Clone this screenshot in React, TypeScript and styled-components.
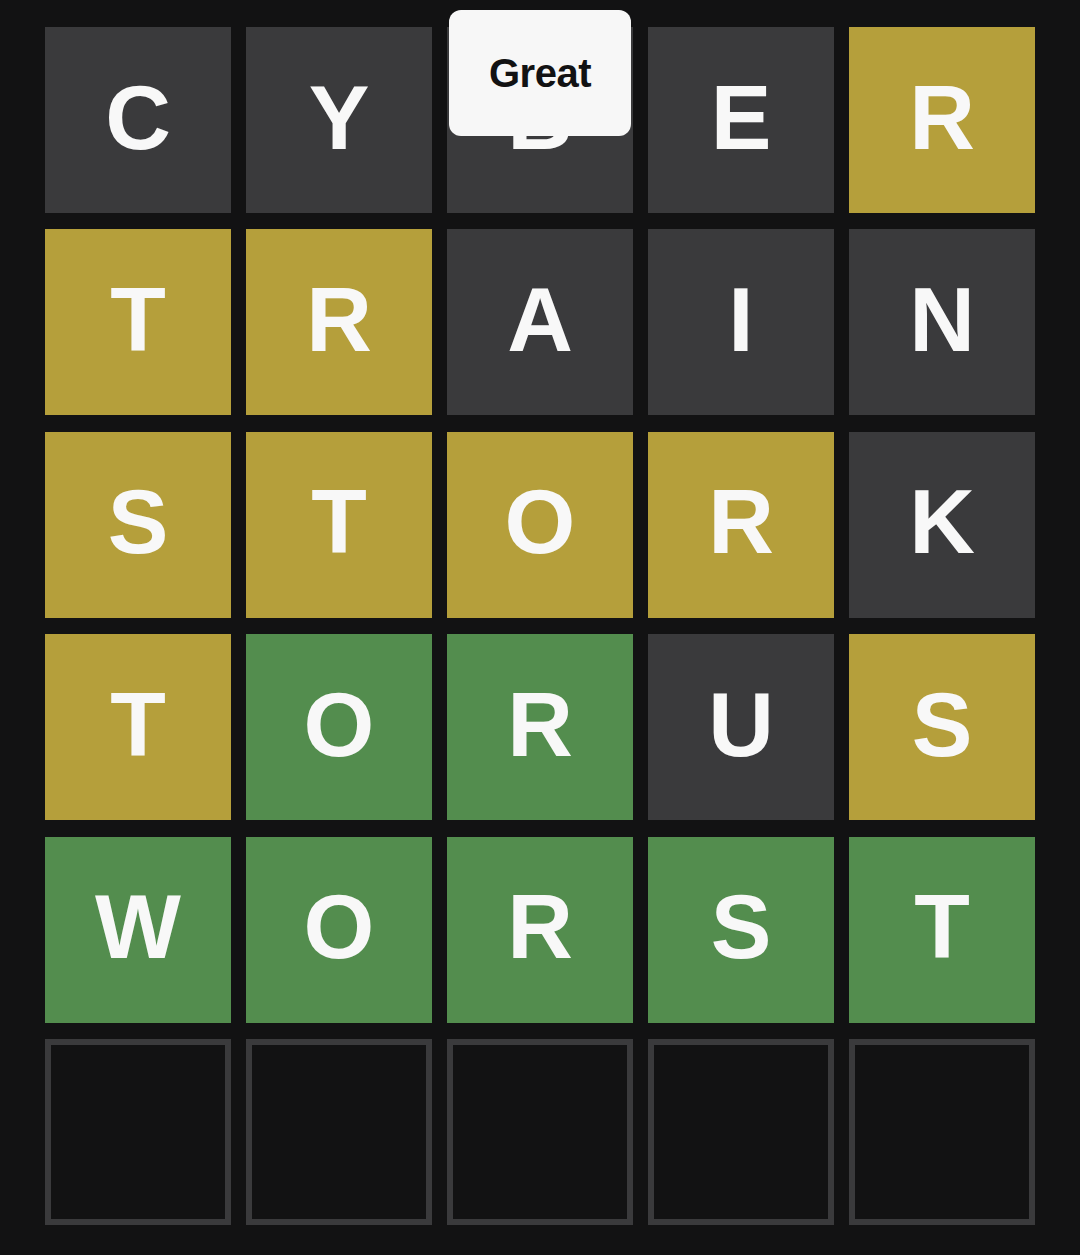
import React from "react";
import styled, { createGlobalStyle } from "styled-components";

const Global = createGlobalStyle`
  html, body { margin: 0; padding: 0; background: #121213; }
  body { font-family: "Liberation Sans", Arial, sans-serif; }
`;

type State = "absent" | "present" | "correct" | "empty";

const colors: Record<State, string> = {
  absent: "#3a3a3c",
  present: "#b59f3b",
  correct: "#538d4e",
  empty: "#121213",
};

const Page = styled.div`
  position: relative;
  width: 1080px;
  height: 1255px;
  background: #121213;
  padding: 27px 45px 0;
  box-sizing: border-box;
`;

const Board = styled.div`
  display: grid;
  grid-template-columns: repeat(5, 186px);
  grid-template-rows: repeat(6, 186px);
  column-gap: 15px;
  row-gap: 16.4px;
`;

const Tile = styled.div<{ $state: State }>`
  box-sizing: border-box;
  display: flex;
  align-items: center;
  justify-content: center;
  background: ${(p) => colors[p.$state]};
  border: ${(p) => (p.$state === "empty" ? "6px solid #3a3a3c" : "none")};
  color: #f8f8f8;
  font-family: "Liberation Sans", Arial, sans-serif;
  font-weight: 700;
  font-size: 91px;
  line-height: 1;
  padding-bottom: 6px;
  text-transform: uppercase;
`;

const Toast = styled.div`
  position: absolute;
  top: 10px;
  left: 449px;
  width: 182px;
  height: 126px;
  border-radius: 12px;
  background: #f7f7f7;
  color: #121213;
  display: flex;
  align-items: center;
  justify-content: center;
  font-family: "Liberation Sans", Arial, sans-serif;
  font-weight: 700;
  font-size: 40px;
  letter-spacing: -0.5px;
`;

const rows: { word: string; states: State[] }[] = [
  { word: "CYBER", states: ["absent", "absent", "absent", "absent", "present"] },
  { word: "TRAIN", states: ["present", "present", "absent", "absent", "absent"] },
  { word: "STORK", states: ["present", "present", "present", "present", "absent"] },
  { word: "TORUS", states: ["present", "correct", "correct", "absent", "present"] },
  { word: "WORST", states: ["correct", "correct", "correct", "correct", "correct"] },
  { word: "     ", states: ["empty", "empty", "empty", "empty", "empty"] },
];

export default function App() {
  return (
    <>
      <Global />
      <Page>
        <Board>
          {rows.map((r, i) =>
            r.states.map((s, j) => (
              <Tile key={`${i}-${j}`} $state={s}>
                {r.word[j].trim()}
              </Tile>
            ))
          )}
        </Board>
        <Toast>Great</Toast>
      </Page>
    </>
  );
}
